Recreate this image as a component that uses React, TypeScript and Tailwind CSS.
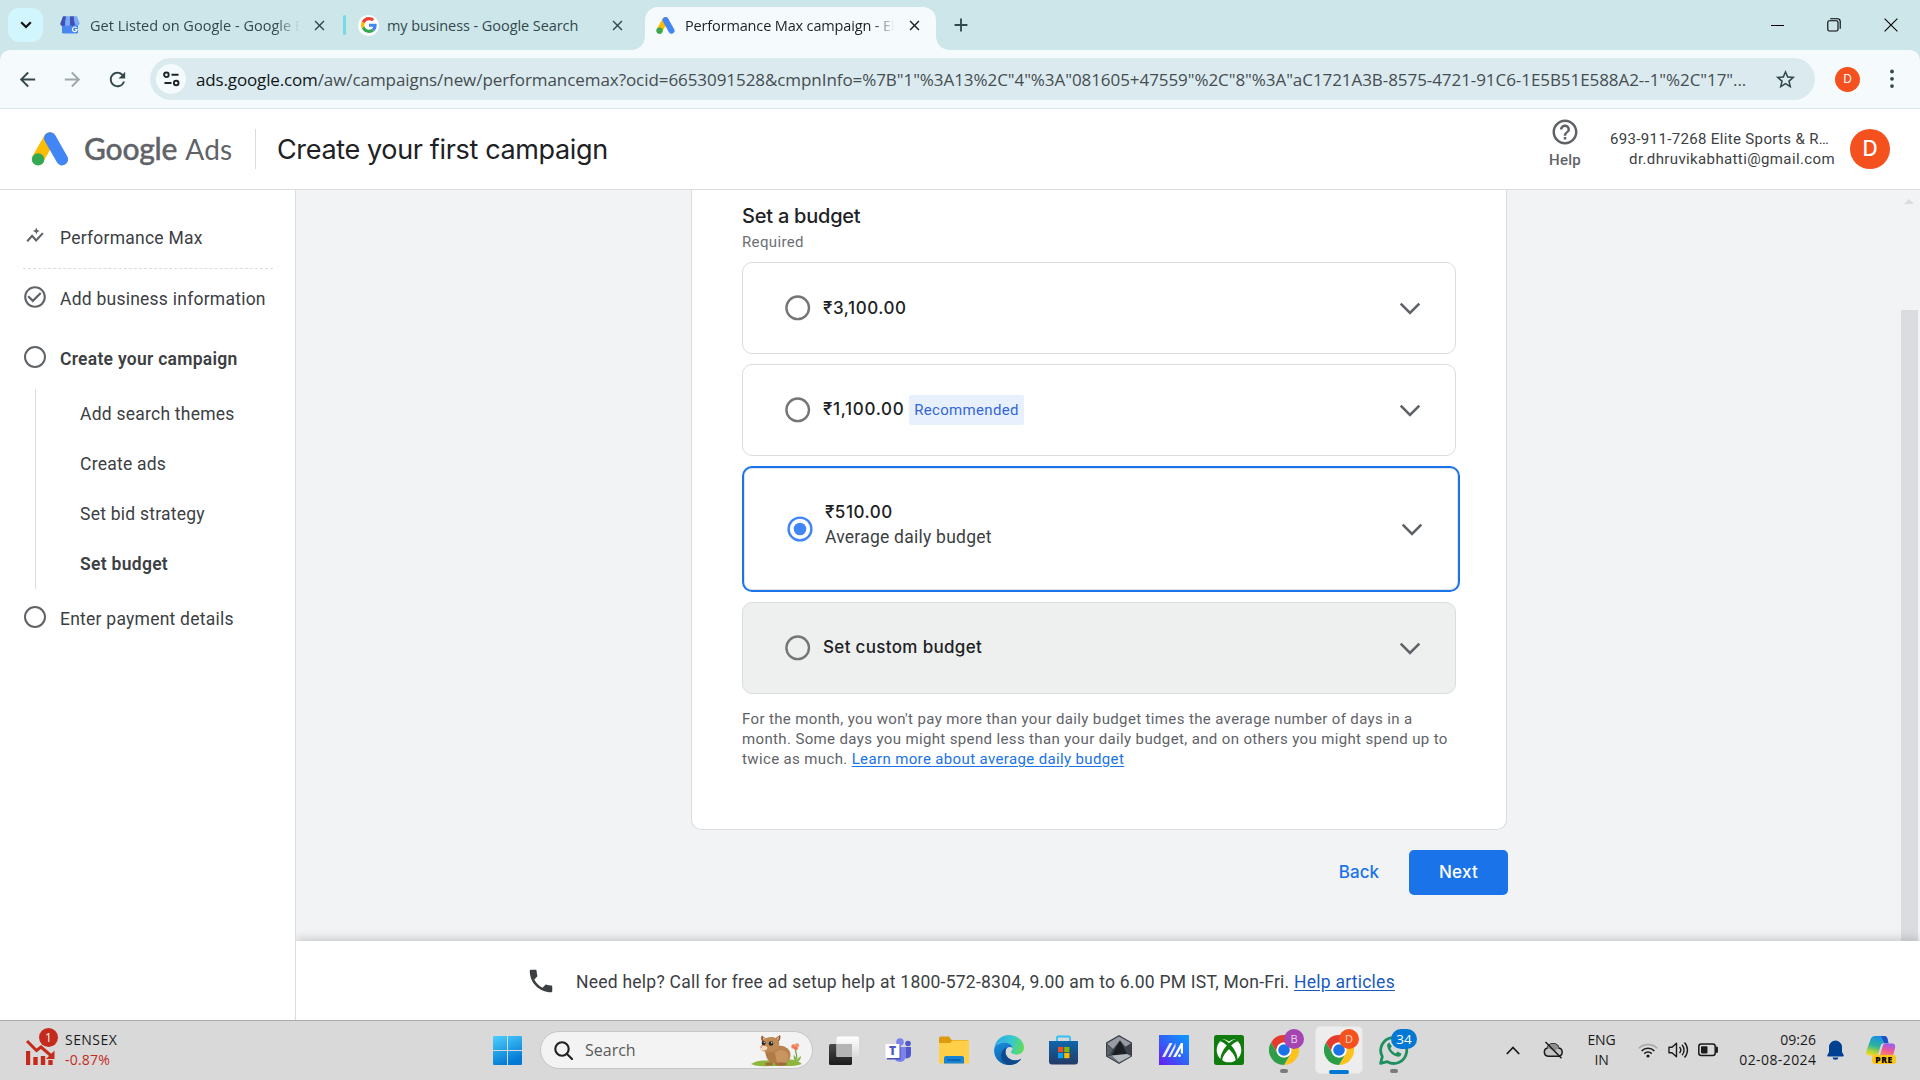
import React from 'react';
import {
  MdAdd,
  MdArrowBack,
  MdArrowForward,
  MdCheckCircleOutline,
  MdClose,
  MdHelpOutline,
  MdPhone,
  MdRefresh,
  MdStarBorder,
} from 'react-icons/md';

/* ---------- logos ---------- */

function AdsLogo({ w, h }: { w: number; h: number }) {
  return (
    <svg width={w} height={h} viewBox="0 0 37 34" className="shrink-0">
      <path d="M6.4 27 L18.2 6.2" stroke="#fbbc04" strokeWidth="12" strokeLinecap="round" />
      <path d="M18.6 6.2 L30.6 27.4" stroke="#4285f4" strokeWidth="12" strokeLinecap="round" />
      <circle cx="6.6" cy="27.4" r="6.2" fill="#34a853" />
    </svg>
  );
}

function GoogleG({ size }: { size: number }) {
  return (
    <svg width={size} height={size} viewBox="0 0 48 48">
      <path fill="#EA4335" d="M24 9.5c3.54 0 6.71 1.22 9.21 3.6l6.85-6.85C35.9 2.38 30.47 0 24 0 14.62 0 6.51 5.38 2.56 13.22l7.98 6.19C12.43 13.72 17.74 9.5 24 9.5z" />
      <path fill="#4285F4" d="M46.98 24.55c0-1.57-.15-3.09-.38-4.55H24v9.02h12.94c-.58 2.96-2.26 5.48-4.78 7.18l7.73 6c4.51-4.18 7.09-10.36 7.09-17.65z" />
      <path fill="#FBBC05" d="M10.53 28.59c-.48-1.45-.76-2.99-.76-4.59s.27-3.14.76-4.59l-7.98-6.19C.92 16.46 0 20.12 0 24c0 3.88.92 7.54 2.56 10.78l7.97-6.19z" />
      <path fill="#34A853" d="M24 48c6.48 0 11.93-2.13 15.89-5.81l-7.73-6c-2.15 1.45-4.92 2.3-8.16 2.3-6.26 0-11.57-4.22-13.47-9.91l-7.98 6.19C6.51 42.62 14.62 48 24 48z" />
    </svg>
  );
}

function BusinessIcon() {
  return (
    <svg width="20" height="18" viewBox="0 0 20 18">
      <path d="M2 6h16v10.2a1.4 1.4 0 0 1-1.4 1.4H3.4A1.4 1.4 0 0 1 2 16.2z" fill="#4a86f0" />
      <path d="M3 .3h3.6L5.3 7.500a2.500 2.500 0 0 1-5 0z" fill="#3f51b5" />
      <path d="M6 .3h4v7.200a2.500 2.500 0 0 1-5 0z" fill="#7baaf7" />
      <path d="M10 .3h4l1 7.200a2.500 2.500 0 0 1-5 0z" fill="#3f51b5" />
      <path d="M13.800.3H17l2.700 7.200a2.500 2.500 0 0 1-4.900 0z" fill="#7baaf7" />
      <path d="M16.600 11.900a2.300 2.300 0 1 0 .5 1.700h-2" stroke="#fff" strokeWidth="1.100" fill="none" />
    </svg>
  );
}

function Chrome({ size }: { size: number }) {
  return (
    <svg width={size} height={size} viewBox="0 0 48 48">
      <path fill="#fcc31e" d="M44.8 12A24 24 0 0 1 24 48L34.400 30A12 12 0 0 0 24 12z" />
      <path fill="#e33b2e" d="M3.200 12A24 24 0 0 1 44.800 12H24A12 12 0 0 0 13.600 30z" />
      <path fill="#2c9d48" d="M3.200 12A24 24 0 0 0 24 48L34.400 30A12 12 0 0 1 13.600 30z" />
      <circle cx="24" cy="24" r="12" fill="#fff" />
      <circle cx="24" cy="24" r="9.300" fill="#1a73e8" />
    </svg>
  );
}

/* ---------- browser chrome ---------- */

const tabText = "font-['Open_Sans',sans-serif] text-[14.5px] whitespace-nowrap overflow-hidden";

function TabStrip() {
  return (
    <div className="flex h-[50px] items-center bg-[#cde6ea] text-[#33484c]">
      <div className="ml-2 flex h-[34px] w-[35px] items-center justify-center rounded-[11px] bg-[#d2f6fd]">
        <svg width="12" height="8" viewBox="0 0 12 8" fill="none" stroke="#111" strokeWidth="2.200">
          <path d="M1.200 1.200 6 6l4.800-4.800" />
        </svg>
      </div>
      <div className="ml-[17px] flex items-center">
        <BusinessIcon />
        <div className={`${tabText} ml-[10px] w-[210px] pt-[2px] tracking-[0.02px] [mask-image:linear-gradient(to_right,#000_88%,transparent)]`}>
          Get Listed on Google - Google Business
        </div>
      </div>
      <MdClose size={17} className="ml-[11px] shrink-0" />
      <div className="ml-[15px] h-5 w-[3px] rounded-full bg-[#7ad9e8]" />
      <div className="ml-3 flex size-[21px] items-center justify-center rounded-full bg-white">
        <GoogleG size={16} />
      </div>
      <div className={`${tabText} ml-[8px] w-[201px] pt-[2px] -tracking-[0.07px]`}>my business - Google Search</div>
      <MdClose size={17} className="ml-[21px] shrink-0" />
      <div className="relative ml-[19px] flex h-[43px] w-[291px] items-center self-end rounded-t-[13px] bg-[#f5fafd] pb-[1px] text-[#1b2225]">
        <div className="absolute -left-[13px] bottom-0 size-[13px] bg-[radial-gradient(circle_at_0_0,transparent_12.5px,#f5fafd_13px)]" />
        <div className="absolute -right-[13px] bottom-0 size-[13px] bg-[radial-gradient(circle_at_100%_0,transparent_12.5px,#f5fafd_13px)]" />
        <div className="ml-[11px] -mt-[6px]">
          <AdsLogo w={19} h={17} />
        </div>
        <div className={`${tabText} -mt-[4px] ml-[10px] w-[209px] -tracking-[0.15px] [mask-image:linear-gradient(to_right,#000_90%,transparent)]`}>
          Performance Max campaign - Elite
        </div>
        <MdClose size={17} className="-mt-[6px] ml-[12px] shrink-0" />
      </div>
      <MdAdd size={22} className="ml-[14px]" />
      <div className="ml-auto flex items-center gap-[43px] pr-[22px] text-black">
        <div className="h-px w-[13px] bg-black" />
        <svg width="14" height="14" viewBox="0 0 14 14" fill="none" stroke="currentColor" strokeWidth="1.100">
          <rect x="0.800" y="2.800" width="10.200" height="10.200" rx="1.500" />
          <path d="M3.200 .8h7.300a2.700 2.700 0 0 1 2.700 2.700v7.300" />
        </svg>
        <svg width="14" height="14" viewBox="0 0 14 14" fill="none" stroke="currentColor" strokeWidth="1.100">
          <path d="m.6.6 12.800 12.800M13.400.6.600 13.400" />
        </svg>
      </div>
    </div>
  );
}

function Toolbar() {
  return (
    <div className="bg-[#cde6ea]">
      <div className="flex h-[59px] items-center rounded-t-[10px] border-b border-[#dbe5e9] bg-[#f5fafd]">
        <MdArrowBack size={23} className="ml-4 text-[#33484c]" />
        <MdArrowForward size={23} className="ml-[22px] text-[#9fa8ab]" />
        <MdRefresh size={23} className="ml-[22px] text-[#33484c]" />
        <div className="ml-[21px] flex h-[42px] w-[1665px] items-center rounded-full bg-[#dbeaef]">
          <div className="ml-[6px] flex size-[30px] items-center justify-center rounded-full bg-[#f5fafd]">
            <svg width="17" height="16" viewBox="0 0 17 16" fill="none" stroke="#1c2629" strokeWidth="1.900">
              <circle cx="3.400" cy="3.800" r="2.300" />
              <path d="M8.500 3.800H15.500M1.500 12H8.500" />
              <circle cx="13.200" cy="12" r="2.300" />
            </svg>
          </div>
          <div className="ml-[10px] flex-1 whitespace-nowrap pt-[2px] font-['Open_Sans',sans-serif] text-[17px] -tracking-[0.065px] text-[#454d50]">
            <span className="-tracking-[0.15px] text-[#111719]">ads.google.com</span>
            /aw/campaigns/new/performancemax?ocid=6653091528&amp;cmpnInfo=%7B"1"%3A13%2C"4"%3A"081605+47559"%2C"8"%3A"aC1721A3B-8575-4721-91C6-1E5B51E588A2--1"%2C"17"...
          </div>
          <MdStarBorder size={23} className="mr-[18px] text-[#33484c]" />
        </div>
        <div className="ml-[20px] flex size-[25px] items-center justify-center rounded-full bg-[#f4511e] font-[Inter,sans-serif] text-[12px] text-white">D</div>
        <svg width="4" height="20" viewBox="0 0 4 20" className="ml-[30px]" fill="#33484c">
          <circle cx="2" cy="2.500" r="1.900" />
          <circle cx="2" cy="9.800" r="1.900" />
          <circle cx="2" cy="17.100" r="1.900" />
        </svg>
      </div>
    </div>
  );
}

/* ---------- ads page ---------- */

function AdsHeader() {
  return (
    <div className="flex h-[81px] items-center border-b border-[#dadce0] bg-white">
      <div className="ml-[31px]">
        <AdsLogo w={38} h={34} />
      </div>
      <div className="-mt-[2px] ml-[15px] w-[171px] whitespace-nowrap font-[Lato,sans-serif] text-[#5f6368]">
        <span className="text-[30px] font-medium -tracking-[0.2px] [-webkit-text-stroke:0.4px_#5f6368]">Google</span>
        <span className="ml-[8px] text-[28px] tracking-[0.2px]">Ads</span>
      </div>
      <div className="h-10 w-px bg-[#dadce0]" />
      <div className="ml-[21px] pt-[2px] font-[Inter,sans-serif] text-[27px] -tracking-[0.35px] text-[#202124]">Create your first campaign</div>
      <div className="-mt-[8px] ml-auto flex flex-col items-center font-[Roboto,sans-serif] text-[15px] font-medium leading-5 tracking-[0.25px] text-[#5f6368]">
        <MdHelpOutline size={30} className="-mt-[4px]" />
        <div className="mt-[3px]">Help</div>
      </div>
      <div className="ml-[29px] w-[225px] whitespace-nowrap font-[Roboto,sans-serif] text-[15px] leading-5 text-[#3c4043]">
        <div className="tracking-[0.35px]">693-911-7268 Elite Sports &amp; R…</div>
        <div className="text-right tracking-[0.38px]">dr.dhruvikabhatti@gmail.com</div>
      </div>
      <div className="ml-[15px] mr-[30px] flex size-10 items-center justify-center rounded-full bg-[#f4511e] font-[Inter,sans-serif] text-[21px] font-medium text-white">D</div>
    </div>
  );
}

function Circle() {
  return <div className="mb-[5px] size-[22px] shrink-0 rounded-full border-[2.2px] border-[#5f6368]" />;
}

const steps = ['Add search themes', 'Create ads', 'Set bid strategy'];

function Sidebar() {
  return (
    <div className="w-[296px] shrink-0 border-r border-[#dadce0] bg-white font-[Roboto,sans-serif] text-[17.5px] tracking-[0.24px] text-[#3c4043]">
      <div className="mt-[23px] flex h-[50px] items-center pl-[26px]">
        <svg width="18" height="17" viewBox="0 0 18 17" className="mb-[6px]" fill="none" stroke="#5f6368" strokeWidth="2.100">
          <path d="m1.200 14.200 4.900-5.300 4 4.600 6.800-7.400" />
          <path d="M10.300.6l1 2.400 2.500 1-2.500 1-1 2.400-1-2.400-2.500-1 2.500-1z" fill="#5f6368" stroke="none" />
        </svg>
        <div className="ml-[16px]">Performance Max</div>
      </div>
      <div className="ml-[23px] mt-[5px] w-[250px] border-t border-dashed border-[#dadce0]" />
      <div className="flex h-[60px] items-center pl-[22px]">
        <MdCheckCircleOutline size={26} className="mb-[5px] text-[#5f6368]" />
        <div className="ml-[12px]">Add business information</div>
      </div>
      <div className="flex h-[60px] items-center pl-[24px]">
        <Circle />
        <div className="ml-[14px] font-semibold tracking-[0.27px]">Create your campaign</div>
      </div>
      <div className="ml-[35px] border-l border-[#dadce0] pl-[44px]">
        {steps.map((s) => (
          <div key={s} className="flex h-[50px] items-center">{s}</div>
        ))}
        <div className="flex h-[50px] items-center font-semibold tracking-[0.3px]">Set budget</div>
      </div>
      <div className="flex h-[60px] items-center pl-[24px]">
        <Circle />
        <div className="ml-[14px]">Enter payment details</div>
      </div>
    </div>
  );
}

function Radio({ on }: { on?: boolean }) {
  return on ? (
    <svg width="26" height="26" viewBox="0 0 26 26" className="shrink-0" fill="none">
      <circle cx="13" cy="13" r="11.400" stroke="#4285f4" strokeWidth="2.400" />
      <circle cx="13" cy="13" r="6.300" fill="#4285f4" />
    </svg>
  ) : (
    <svg width="26" height="26" viewBox="0 0 26 26" className="shrink-0" fill="none">
      <circle cx="12.700" cy="12.800" r="11.300" stroke="#757575" strokeWidth="2.400" />
    </svg>
  );
}

const amount = 'font-[Inter,sans-serif] text-[17px] font-medium text-[#202124]';
const option = 'flex h-[92px] w-[714px] items-center rounded-[10px] border border-[#dadce0] pl-[42px] pr-[34px]';

function Chevron() {
  return (
    <svg width="22" height="13" viewBox="0 0 22 13" className="ml-auto shrink-0" fill="none" stroke="#5f6368" strokeWidth="2.600">
      <path d="m1.700 1.600 9.300 9.300 9.300-9.300" />
    </svg>
  );
}

function BudgetCard() {
  return (
    <div className="w-[816px] rounded-b-[10px] border border-t-0 border-[#dadce0] bg-white px-[50px] pb-[60px] pt-[11px]">
      <div className="h-[30px] font-[Inter,sans-serif] text-[20px] font-medium leading-[30px] -tracking-[0.23px] text-[#202124]">Set a budget</div>
      <div className="h-[22px] font-[Roboto,sans-serif] text-[15px] leading-[22px] tracking-[0.36px] text-[#6b6f74]">Required</div>
      <div className="mt-[9px] flex flex-col gap-[10px]">
        <div className={option}>
          <Radio />
          <div className={`${amount} ml-3 pt-[1px] tracking-[0.57px]`}>₹3,100.00</div>
          <Chevron />
        </div>
        <div className={option}>
          <Radio />
          <div className={`${amount} ml-3 w-[86px] tracking-[0.67px]`}>₹1,100.00</div>
          <div className="h-[30px] w-[115px] rounded-[2px] bg-[#e8f0fe] text-center font-[Roboto,sans-serif] text-[15px] leading-[30px] tracking-[0.32px] text-[#3367d6]">
            Recommended
          </div>
          <Chevron />
        </div>
        <div className="flex h-[126px] w-[718px] items-center rounded-[10px] border-2 border-[#1a73e8] pl-[43px] pr-[35px] shadow-[inset_0_0_0_1px_#e3e5e8]">
          <Radio on />
          <div className="ml-3 pb-[10px] leading-[26px]">
            <div className={`${amount} relative top-px tracking-[0.5px]`}>₹510.00</div>
            <div className="font-[Roboto,sans-serif] text-[17.5px] tracking-[0.24px] text-[#3c4043]">Average daily budget</div>
          </div>
          <Chevron />
        </div>
        <div className={`${option} bg-[#eef0ef]`}>
          <Radio />
          <div className={`${amount} ml-3 tracking-[0.33px]`}>Set custom budget</div>
          <Chevron />
        </div>
      </div>
      <div className="mt-[15px] whitespace-nowrap font-[Roboto,sans-serif] text-[15px] leading-5 tracking-[0.365px] text-[#5f6368]">
        For the month, you won't pay more than your daily budget times the average number of days in a
        <br />
        month. Some days you might spend less than your daily budget, and on others you might spend up to
        <br />
        twice as much. <a className="text-[#1a73e8] underline underline-offset-2">Learn more about average daily budget</a>
      </div>
    </div>
  );
}

function Main() {
  return (
    <div className="flex min-h-0 flex-1 bg-[#f1f3f4]">
      <div className="flex-1 pl-[395px]">
        <BudgetCard />
        <div className="mt-[20px] flex w-[817px] items-center justify-end font-[Inter,sans-serif] text-[17px] font-medium">
          <div className="text-[#1a73e8]">Back</div>
          <div className="ml-[30px] flex h-[45px] w-[99px] items-center justify-center rounded-[5px] bg-[#1a73e8] tracking-[0.27px] text-white">Next</div>
        </div>
      </div>
      <div className="flex w-[21px] flex-col items-center pl-[1px] pr-[2px]">
        <div className="mt-[9px] size-0 border-x-[5px] border-b-[5px] border-x-transparent border-b-[#dadce0]" />
        <div className="mt-[106px] w-[17px] flex-1 bg-[#dadce0]" />
      </div>
    </div>
  );
}

function HelpBar() {
  return (
    <div className="relative flex h-[79px] items-center bg-white pt-[3px] font-[Roboto,sans-serif] text-[17.5px] tracking-[0.24px] text-[#3c4043] shadow-[0_-2px_9px_rgba(60,64,67,0.24)]">
      <MdPhone size={30} className="-mt-[2px] ml-[230px]" />
      <div className="ml-[20px] whitespace-nowrap">
        Need help? Call for free ad setup help at 1800-572-8304, 9.00 am to 6.00 PM IST, Mon-Fri.{' '}
        <a className="text-[#185abc] underline underline-offset-2">Help articles</a>
      </div>
    </div>
  );
}

/* ---------- taskbar ---------- */

function Cell({ children, pill }: { children: React.ReactNode; pill?: boolean }) {
  return (
    <div className="relative flex h-full w-[55px] shrink-0 items-center justify-center">
      {children}
      {pill && <div className="absolute bottom-[6px] h-1 w-2 rounded-full bg-[#7b7b7b]" />}
    </div>
  );
}

function Animal() {
  return (
    <svg width="54" height="33" viewBox="0 0 54 33">
      <path d="M1 30C8 25 18 27 26 26s20-2 26 4c-6 2.500-14 2-25 2S6 33 1 30z" fill="#8fb63c" />
      <path d="M47 27c0-6-1-9-2-13" stroke="#6ea53a" strokeWidth="1.200" fill="none" />
      <path d="M47 28c-3-1-4-4-3-7 2 2 3 4 3 7zm0 0c3-1 4-4 4-6-2 1-4 3-4 6z" fill="#86b94a" />
      <circle cx="43.500" cy="12.500" r="2.200" fill="#f0805a" />
      <circle cx="47" cy="11.500" r="2.200" fill="#f4946e" />
      <circle cx="46" cy="14.500" r="1.800" fill="#ef7450" />
      <ellipse cx="29.500" cy="21" rx="11" ry="9.500" fill="#b9834f" />
      <ellipse cx="31" cy="23" rx="7.500" ry="7" fill="#c8945f" />
      <path d="M15 14c0 7 2 13 7 15h5l-2-10z" fill="#b27a47" />
      <ellipse cx="19" cy="30" rx="4" ry="1.800" fill="#a36c3c" />
      <ellipse cx="31" cy="30" rx="6" ry="1.800" fill="#a36c3c" />
      <path d="M12 1.500c-1.500 2-1 5 1 7l4-3zM30 1c1 2.500.5 5-2 7.500L24.500 5z" fill="#8d5a31" />
      <path d="M13 3c-.5 1.500 0 3 1.200 4.200L16 5zM29 2.600c.3 1.500-.3 3-1.400 4.200L26 5z" fill="#e8a98a" />
      <path d="M21 3c-6 0-9 4-9 8-2 1-3 3-1 5s9 3 13 1 6-6 5-9-4-5-8-5z" fill="#c08a55" />
      <path d="M9.500 13.500c0 2 2 3.300 4.500 3s4-2 3-3.500-7-1.500-7.500.5z" fill="#f3dcc6" />
      <circle cx="13.600" cy="9" r="2" fill="#20242c" />
      <circle cx="21" cy="9.500" r="2.300" fill="#20242c" />
      <circle cx="14.200" cy="8.400" r=".6" fill="#fff" />
      <circle cx="21.700" cy="8.800" r=".7" fill="#fff" />
      <path d="m10 13 2.500-.3-1 1.400z" fill="#e2726e" />
    </svg>
  );
}

function Taskbar() {
  return (
    <div className="flex h-[60px] items-center border-t border-[#aaaaaa] bg-[#d9d9d9] pb-[1px] font-['Open_Sans',sans-serif]">
      <div className="flex w-[480px] items-center pl-[26px]">
        <div className="relative h-[38px] w-[36px]">
          <svg width="32" height="38" viewBox="0 0 32 38" fill="none" stroke="#c42b1c">
            <path d="M2 20v14M9.500 26v8M17 25v9M24.500 29v5" strokeWidth="4.400" />
            <path d="m1 10 9.500 9.500 4.500-3.500 11 9.500" strokeWidth="3" />
            <path d="M28.500 19.500v8.500H20z" fill="#c42b1c" stroke="none" />
          </svg>
          <div className="absolute -top-[3px] left-[13px] flex size-[19px] items-center justify-center rounded-full bg-[#c42b1c] text-[12px] text-white">1</div>
        </div>
        <div className="ml-[3px] text-[14px] leading-5">
          <div className="tracking-[0.45px] text-[#1b1b1b]">SENSEX</div>
          <div className="tracking-[0.22px] text-[#c42b1c]">-0.87%</div>
        </div>
      </div>

      <Cell>
        <svg width="29" height="29" viewBox="0 0 29 29">
          <defs>
            <linearGradient id="win" x1="0" y1="0" x2=".4" y2="1">
              <stop offset="0" stopColor="#4cd0fd" />
              <stop offset="1" stopColor="#0279d4" />
            </linearGradient>
          </defs>
          <path fill="url(#win)" d="M1 0h13v14H0V1a1 1 0 0 1 1-1zM15 0h13a1 1 0 0 1 1 1v13H15zM0 15h14v14H1a1 1 0 0 1-1-1zM15 15h14v13a1 1 0 0 1-1 1H15z" />
        </svg>
      </Cell>
      <div className="ml-[5px] mr-[3px] flex h-[38px] w-[273px] shrink-0 items-center rounded-full border border-[#c6c6c6] bg-[#f3f3f3]">
        <svg width="19" height="19" viewBox="0 0 19 19" className="ml-[13px]" fill="none" stroke="#202020" strokeWidth="2.100">
          <circle cx="8" cy="8" r="6.700" />
          <path d="m12.800 12.800 5.200 5.200" strokeLinecap="round" />
        </svg>
        <div className="ml-[12px] text-[16px] text-[#5a5a5a]">Search</div>
        <div className="ml-auto mr-[8px]">
          <Animal />
        </div>
      </div>

      <Cell>
        <svg width="30" height="29" viewBox="0 0 30 29">
          <defs>
            <linearGradient id="tv" x1="0" y1="0" x2="0" y2="1">
              <stop offset="0" stopColor="#4a4a4a" />
              <stop offset="1" stopColor="#1c1c1c" />
            </linearGradient>
            <linearGradient id="tv2" x1="0" y1="0" x2="0" y2="1">
              <stop offset="0" stopColor="#ffffff" />
              <stop offset="1" stopColor="#dcdcdc" />
            </linearGradient>
          </defs>
          <rect x="0" y="8" width="23" height="21" rx="1.500" fill="url(#tv)" />
          <rect x="7.500" y="0.500" width="22.500" height="20.500" rx="1.500" fill="url(#tv2)" />
          <rect x="7.500" y="8" width="15.500" height="13" fill="#b4b4b4" />
        </svg>
      </Cell>
      <Cell>
        <svg width="27" height="25" viewBox="0 0 27 25">
          <circle cx="23" cy="5.500" r="2.800" fill="#5059c9" />
          <path d="M19 9h7v7.500a4 4 0 0 1-7 2.500z" fill="#5059c9" />
          <circle cx="15" cy="4" r="3.800" fill="#7b83eb" />
          <path d="M9 9h12v9a6 6 0 0 1-12 0z" fill="#7b83eb" />
          <rect x="2" y="7" width="13.500" height="14.500" fill="#4a50b8" />
          <rect x="0.500" y="6" width="14" height="14" fill="#fff" />
        </svg>
        <span className="absolute left-[18px] top-[22px] text-[12px] font-extrabold leading-4 text-[#5059c9]">T</span>
      </Cell>
      <Cell>
        <svg width="30" height="28" viewBox="0 0 30 28">
          <path d="M0 2a1.500 1.500 0 0 1 1.500-1.500H10L12.500 4H28a1.500 1.500 0 0 1 1.500 1.500V12H0z" fill="#dd9a0c" />
          <path d="M0 7h11l2.500-2.500H29a1 1 0 0 1 1 1V26a1.500 1.500 0 0 1-1.500 1.500h-27A1.500 1.500 0 0 1 0 26z" fill="#ffcf48" />
          <path d="M5 27.500V22a2 2 0 0 1 2-2h16a2 2 0 0 1 2 2v5.500z" fill="#1583d8" />
          <path d="M8.500 24h13" stroke="#0a5ca8" strokeWidth="1.500" />
        </svg>
      </Cell>
      <Cell>
        <svg width="30" height="30" viewBox="0 0 30 30">
          <defs>
            <linearGradient id="e1" x1="0" y1=".3" x2="1" y2=".5">
              <stop offset="0" stopColor="#2aa9e8" />
              <stop offset=".55" stopColor="#35c8d0" />
              <stop offset="1" stopColor="#5fdc5a" />
            </linearGradient>
            <linearGradient id="e2" x1="0" y1="0" x2=".6" y2="1">
              <stop offset="0" stopColor="#1690e0" />
              <stop offset="1" stopColor="#0c59a4" />
            </linearGradient>
          </defs>
          <path d="M.3 13C1.500 5 8 0 15 0c9 0 15 6 15 12.500 0 4.500-3.500 7-7.500 7-3 0-5.500-1-5.500-2.500 0-1 1.500-1.500 1.500-4 0-3-3.500-5.500-8-5.500C5.500 7.500 1.500 9.500.3 13z" fill="url(#e1)" />
          <path d="M.2 14C1 9.800 5.500 7.500 10.500 7.500c4.500 0 8 2.500 8 5.500-2-2-6.500-1-7 3.500-.4 5 4.500 9 9.500 9 3 0 5-1 6.300-2C25 27.500 20.500 30 15 30 6 30-.8 22.500.2 14z" fill="url(#e2)" />
          <path d="M11.500 16.500c-.4 5 4.500 9 9.500 9 3 0 5-1 6.300-2C25 27.500 20.500 30 15 30c-5-1-8.500-6-7.800-10.500.5-3.500 3-6.300 5.800-7.500-1 1-1.500 2.500-1.500 4.500z" fill="#114a8b" />
        </svg>
      </Cell>
      <Cell>
        <svg width="29" height="30" viewBox="0 0 29 30">
          <defs>
            <linearGradient id="st" x1="0" y1="0" x2="0" y2="1">
              <stop offset="0" stopColor="#0e66ac" />
              <stop offset="1" stopColor="#243a66" />
            </linearGradient>
          </defs>
          <path d="M8 6V2.800A1.300 1.300 0 0 1 9.300 1.500h10.400A1.300 1.300 0 0 1 21 2.800V6" fill="none" stroke="#32bff5" strokeWidth="1.800" />
          <path d="M0 6h29v20.500a3 3 0 0 1-3 3H3a3 3 0 0 1-3-3z" fill="url(#st)" />
          <rect x="9" y="12" width="5.200" height="5.200" fill="#f25022" />
          <rect x="15.200" y="12" width="5.200" height="5.200" fill="#7fba00" />
          <rect x="9" y="18" width="5.200" height="5.200" fill="#00a4ef" />
          <rect x="15.200" y="18" width="5.200" height="5.200" fill="#ffb900" />
        </svg>
      </Cell>
      <Cell>
        <svg width="28" height="30" viewBox="0 0 28 30">
          <path d="m14 0 13 7.500v14L14 29 1 21.500v-14z" fill="#3c4248" />
          <path d="m14 1.500 12 6.800-5.500 3.500L15 5.500 8 14 2 8.500z" fill="#969ca2" />
          <path d="m2 9.500 5.500 4.700L5 19.500 2 21z" fill="#5a6067" />
          <path d="m15 5.500 7 13.500-15.500 1.500z" fill="#1c2024" />
          <path d="M6.500 20.500 22 19l4 2L14 27.500z" fill="#b4b9be" />
          <path d="M2.500 21.300 6.500 20.500 14 27.500z" fill="#757b82" />
        </svg>
      </Cell>
      <Cell>
        <svg width="30" height="30" viewBox="0 0 30 30">
          <defs>
            <linearGradient id="ma" x1="1" y1="0" x2="0" y2="1">
              <stop offset="0" stopColor="#0a9cff" />
              <stop offset=".5" stopColor="#2f63f8" />
              <stop offset="1" stopColor="#6a1cf0" />
            </linearGradient>
          </defs>
          <rect width="30" height="30" fill="url(#ma)" />
          <path d="M3 22 10.500 8h3L6 22zM9 22l7.500-14v4L11.500 22z" fill="#e8ecff" />
          <path d="M14 22 22 8h2v10.500h-2.200V13L17 22z" fill="#fff" />
          <circle cx="20.500" cy="20.700" r="1.400" fill="#fff" />
        </svg>
      </Cell>
      <Cell>
        <svg width="30" height="30" viewBox="0 0 30 30">
          <rect width="30" height="30" rx="2.500" fill="#107c10" />
          <circle cx="15" cy="15" r="12.300" fill="#fff" />
          <path d="M7.500 4.500C10 3.500 13 5 15 6.600 17 5 20 3.500 22.500 4.500 21 2.500 18 1.500 15 1.500S9 2.500 7.500 4.500z" fill="#107c10" />
          <path d="M6.500 25C6 20 10 13.500 12.800 10.600 10.500 8.500 8 6.200 6 6.300L8 4.300C11 4.600 13.500 6.800 15 8.200c1.500-1.400 4-3.600 7-3.900l2 2c-2-.1-4.500 2.200-6.800 4.300C20 13.500 24 20 23.500 25l-1.800 1C22 22 18 17 15 14.300 12 17 8 22 8.300 26z" fill="#107c10" />
        </svg>
      </Cell>
      <Cell pill>
        <Chrome size={30} />
        <div className="absolute left-[28px] top-[8px] flex size-5 items-center justify-center rounded-full bg-[#a445b2] text-[11px] text-[#ead3ee]">B</div>
      </Cell>
      <Cell>
        <div className="absolute left-[3.5px] top-[5px] h-12 w-12 rounded-[5px] border border-[#e3e3e3] bg-[#ededed]" />
        <div className="relative flex">
          <Chrome size={30} />
        </div>
        <div className="absolute left-[28px] top-[8px] flex size-5 items-center justify-center rounded-full bg-[#f4511e] text-[11px] text-[#ffd9cc]">D</div>
        <div className="absolute bottom-[5px] h-1 w-5 rounded-full bg-[#0078d4]" />
      </Cell>
      <Cell pill>
        <svg width="30" height="30" viewBox="0 0 30 30" fill="none" stroke="#1f8f5f">
          <path d="M1.600 28.400 3.300 21.600A13 13 0 1 1 8.300 26.700z" strokeWidth="2.800" strokeLinejoin="round" />
          <path d="M10.300 7.500c-1.800.7-2.500 2.300-2 4.300 1.100 4.800 5.400 9.200 10.700 9.900 1.700.1 3.200-1 3.400-3l-3.700-2.100-1.900 1.900c-2.500-1-4.500-3-5.400-5.400l1.500-1.700z" fill="#1f8f5f" stroke="none" />
        </svg>
        <div className="absolute left-[25px] top-[8px] flex h-5 w-[26px] items-center justify-center rounded-full bg-[#0078d4] text-[13.5px] text-white">34</div>
      </Cell>

      <div className="ml-auto flex items-center pr-[24px] text-[#1b1b1b]">
        <svg width="14" height="9" viewBox="0 0 14 9" fill="none" stroke="currentColor" strokeWidth="1.800">
          <path d="m.8 8 6.200-6.500L13.200 8" />
        </svg>
        <svg width="21" height="18" viewBox="0 0 21 18" className="ml-[23px]" fill="none" stroke="currentColor" strokeWidth="1.500">
          <path d="M5 15.200a4.200 4.200 0 0 1-.6-8.200 6 6 0 0 1 11.400 0 4.200 4.200 0 0 1 .2 8.200z" fill="#c4c4c4" />
          <path d="M4.400 7a6 6 0 0 1 11.400 0l-4 3z" fill="#8f8f8f" stroke="none" />
          <path d="m2.500 1 16 16.200" />
        </svg>
        <div className="ml-[23px] w-[29px] text-center text-[14px] leading-5 -tracking-[0.15px]">
          <div>ENG</div>
          <div>IN</div>
        </div>
        <svg width="20" height="16" viewBox="0 0 20 16" className="ml-[22px]" fill="none" stroke="currentColor" strokeWidth="1.500">
          <path d="M.8 6.200a13 13 0 0 1 18.400 0" stroke="#a5a5a5" />
          <path d="M3.600 9a9 9 0 0 1 12.800 0M6.300 11.600a5.300 5.300 0 0 1 7.400 0" />
          <circle cx="10" cy="14" r="1.600" fill="currentColor" stroke="none" />
        </svg>
        <svg width="21" height="18" viewBox="0 0 21 18" className="ml-[10px]" fill="none" stroke="currentColor" strokeWidth="1.400">
          <path d="M1 6.300h3L8.500 2.200v13.600L4 11.700H1z" strokeLinejoin="round" />
          <path d="M11.500 6a4.500 4.500 0 0 1 0 6M14 3.800a7.600 7.600 0 0 1 0 10.400M16.500 1.500a11 11 0 0 1 0 15" />
        </svg>
        <svg width="21" height="14" viewBox="0 0 21 14" className="ml-[9px]" fill="none" stroke="currentColor" strokeWidth="1.500">
          <rect x=".8" y="1" width="16.400" height="11.500" rx="2.500" />
          <rect x="3" y="3.200" width="6.500" height="7.200" rx=".8" fill="currentColor" stroke="none" />
          <path d="M18.800 4.700v4.200" strokeWidth="2.200" strokeLinecap="round" />
        </svg>
        <div className="ml-[20px] w-[77px] whitespace-nowrap text-right text-[14px] leading-5">
          <div>09:26</div>
          <div className="-mr-[0.4px] tracking-[0.41px]">02-08-2024</div>
        </div>
        <svg width="17" height="20" viewBox="0 0 17 20" className="ml-[11px]" fill="#003f92">
          <path d="M8.500.5a6.500 6.500 0 0 1 6.500 6.500v5l1.700 3.300c.3.600 0 1.200-.7 1.200H1c-.7 0-1-.6-.7-1.200L2 12V7A6.500 6.500 0 0 1 8.500.5zM5.700 17.500h5.600a2.800 2.200 0 0 1-5.600 0z" />
        </svg>
        <div className="relative ml-[22px]">
          <svg width="30" height="29" viewBox="0 0 30 29">
            <defs>
              <linearGradient id="cp1" x1=".5" y1="0" x2=".2" y2="1">
                <stop offset="0" stopColor="#1b8fe6" />
                <stop offset=".5" stopColor="#2db59a" />
                <stop offset=".8" stopColor="#b7d33a" />
                <stop offset="1" stopColor="#fbd61c" />
              </linearGradient>
              <linearGradient id="cp2" x1=".6" y1="0" x2=".3" y2="1">
                <stop offset="0" stopColor="#9b5cf0" />
                <stop offset=".5" stopColor="#ea5a9c" />
                <stop offset="1" stopColor="#ff8a5c" />
              </linearGradient>
            </defs>
            <path d="M9 0h9c2 0 3 1.200 3.500 3l1 4.200h-4.500c-2 0-3 1-3.500 3l-2 7c-.4 1.500-1.500 2.300-3 2.300H3.500C.8 19.500-.3 17.500.4 15L4.500 3.500C5.300 1.200 6.800 0 9 0z" fill="url(#cp1)" />
            <path d="M15 0h3c2 0 3 1.200 3.500 3l1 4.200h-4z" fill="#1f4fc4" />
            <path d="M19 7.500h7c2.600 0 3.700 1.800 3.100 4.200L27 20H11.500c1.800-.3 2.700-1.300 3.200-3l2-7c.4-1.600 1-2.500 2.300-2.500z" fill="url(#cp2)" />
          </svg>
          <div className="absolute bottom-[1px] left-[6px] h-[9px] w-[24px] rounded-[3px] bg-[#ffc61a] text-center text-[8.500px] font-extrabold leading-[9px] tracking-[0.6px] text-black">PRE</div>
        </div>
      </div>
    </div>
  );
}

export default function App() {
  return (
    <div className="flex h-[1080px] w-[1920px] flex-col overflow-hidden bg-white">
      <TabStrip />
      <Toolbar />
      <AdsHeader />
      <div className="flex min-h-0 flex-1">
        <Sidebar />
        <div className="flex min-w-0 flex-1 flex-col overflow-hidden">
          <Main />
          <HelpBar />
        </div>
      </div>
      <Taskbar />
    </div>
  );
}
